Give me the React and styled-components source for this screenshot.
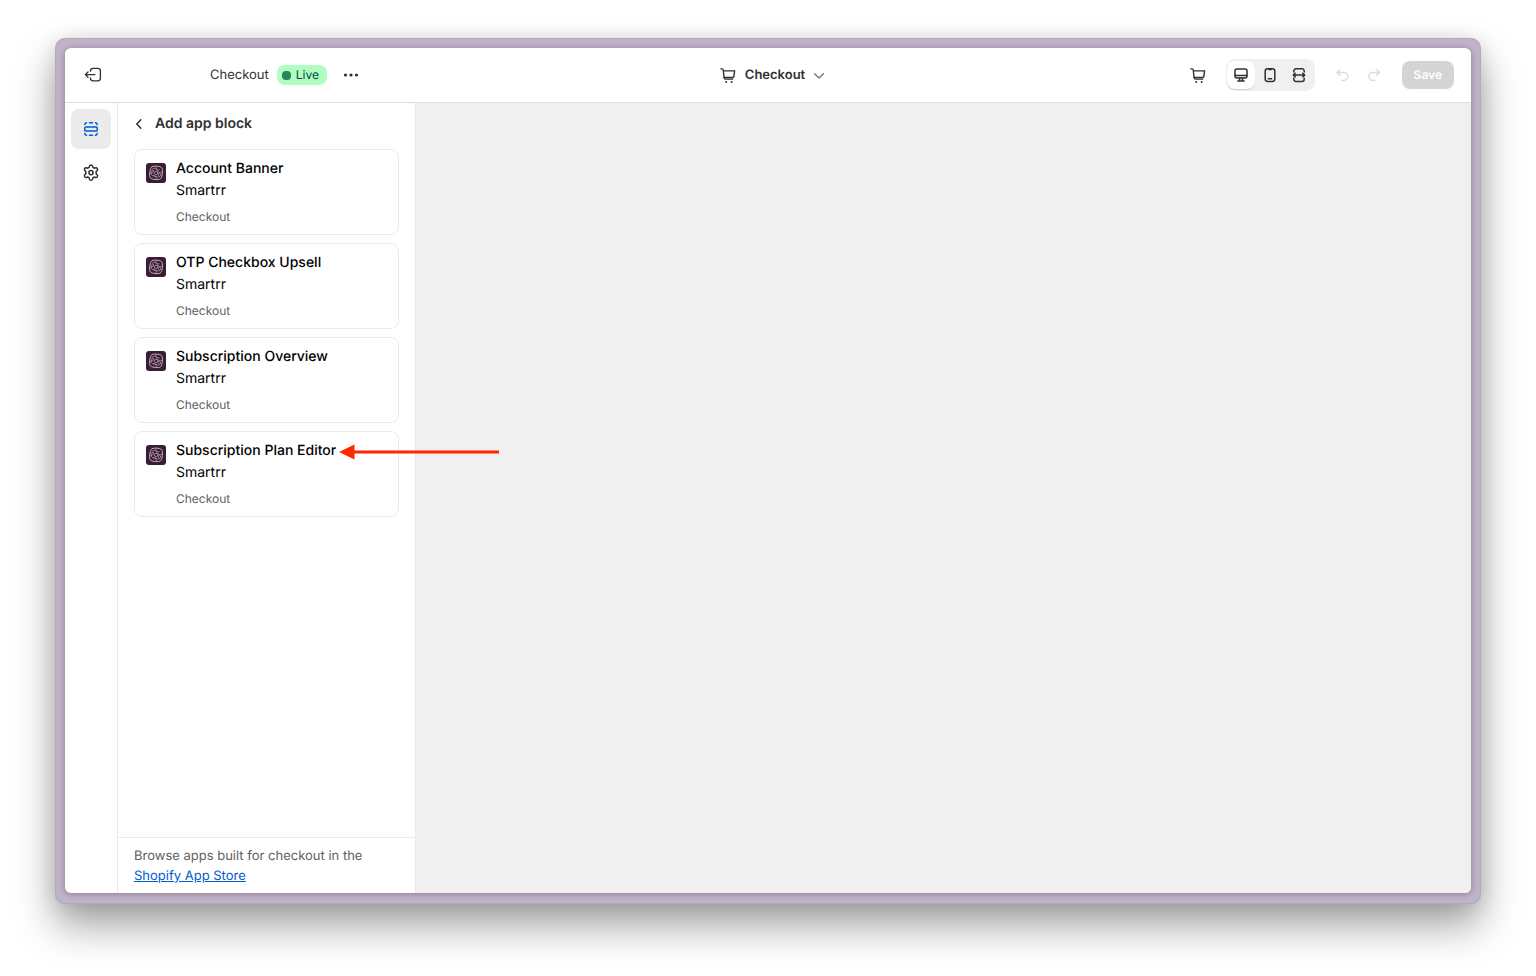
import React from "react";
import styled, { createGlobalStyle, css } from "styled-components";

const GlobalStyle = createGlobalStyle`
  *, *::before, *::after { box-sizing: border-box; }
  body {
    margin: 0;
    background: #fff;
    color: #303030;
    font-family: Inter, "Liberation Sans", sans-serif;
    font-size: 13px;
    line-height: 20px;
    text-rendering: geometricPrecision;
  }
  h1, h2, p, ul { margin: 0; padding: 0; font-weight: inherit; font-size: inherit; }
  button { font: inherit; color: inherit; border: 0; background: none; padding: 0; cursor: pointer; text-rendering: inherit; }
`;

const Page = styled.div`
  display: flex;
  min-height: 100vh;
  padding: 38px 55px 72px;
  overflow: hidden;
`;

const Frame = styled.div`
  flex: 1;
  display: flex;
  min-width: 0;
  padding: 10px 10px 11px;
  border-radius: 10px;
  background: #c1b3c7;
  box-shadow:
    inset 0 0 0 1px rgba(150, 135, 155, 0.25),
    0 22px 40px rgba(0, 0, 0, 0.36),
    0 2px 20px rgba(0, 0, 0, 0.12);
`;

const Window = styled.div`
  flex: 1;
  display: flex;
  flex-direction: column;
  min-width: 0;
  border-radius: 6px;
  background: #fff;
  box-shadow: 0 1px 6px rgba(60, 40, 70, 0.4);
`;

const TopBar = styled.header`
  display: grid;
  grid-template-columns: 1fr auto 1fr;
  align-items: center;
  height: 55px;
  padding: 0 17px 0 18px;
  border-bottom: 1px solid #dedede;
`;

const TopLeft = styled.div`
  display: flex;
  align-items: center;
  justify-content: space-between;
  width: 278px;
`;

const TopRight = styled.div`
  display: flex;
  align-items: center;
  justify-content: flex-end;
`;

const IconButton = styled.button`
  display: flex;
  align-items: center;
  justify-content: center;
  width: 20px;
  height: 20px;
  border-radius: 8px;
  color: ${(p) => p.$color || "#303030"};
`;

const Profile = styled.div`
  display: flex;
  align-items: center;
  gap: 8px;
`;

const ProfileName = styled.span`
  font-size: 13px;
`;

const LiveBadge = styled.span`
  display: flex;
  align-items: center;
  gap: 5px;
  height: 20px;
  padding: 0 8px 0 5px;
  margin-right: 6px;
  border-radius: 8px;
  background: #affebf;
  color: #014b40;
  font-size: 12px;
`;

const LiveDot = styled.span`
  width: 9px;
  height: 9px;
  border-radius: 4px;
  background: #29845a;
`;

const PagePicker = styled.button`
  display: flex;
  align-items: center;
  gap: 4px;
  padding-left: 10px;
  font-weight: 600;
`;

const PageName = styled.span`
  padding-left: 3px;
`;

const DeviceGroup = styled.div`
  display: flex;
  align-items: center;
  gap: 1px;
  height: 32px;
  margin: 0 17px 0 18px;
  padding: 1px 2px 1px 1px;
  border-radius: 9px;
  background: #f0f0f0;
`;

const DeviceButton = styled.button`
  display: flex;
  align-items: center;
  justify-content: center;
  width: 28px;
  height: 28px;
  border-radius: 8px;
  ${(p) =>
    p.$active &&
    css`
      background: #fff;
      box-shadow: 0 1px 1px rgba(0, 0, 0, 0.14);
    `}
`;

const HistoryGroup = styled.div`
  display: flex;
  gap: 12px;
  margin-right: 18px;
`;

const SaveButton = styled.button`
  height: 28px;
  padding: 0 12px;
  border-radius: 8px;
  background: #d4d4d4;
  color: #fff;
  font-size: 12px;
  font-weight: 600;
`;

const Body = styled.div`
  flex: 1;
  display: flex;
  min-height: 0;
`;

const Rail = styled.nav`
  display: flex;
  flex-direction: column;
  gap: 4px;
  width: 53px;
  padding: 6px;
  border-right: 1px solid #e6e6e6;
`;

const RailButton = styled.button`
  display: flex;
  align-items: center;
  justify-content: center;
  width: 40px;
  height: 40px;
  border-radius: 8px;
  background: ${(p) => (p.$active ? "#ebebeb" : "transparent")};
  color: ${(p) => (p.$active ? "#005bd3" : "#303030")};
`;

const Panel = styled.aside`
  position: relative;
  z-index: 1;
  display: flex;
  flex-direction: column;
  width: 298px;
  border-right: 1px solid #ebebeb;
`;

const PanelHeader = styled.div`
  display: flex;
  align-items: center;
  gap: 6px;
  padding: 10px 11px 15px;
`;

const PanelTitle = styled.h1`
  padding-top: 1px;
  font-size: 14px;
  font-weight: 600;
`;

const BlockList = styled.ul`
  flex: 1;
  display: flex;
  flex-direction: column;
  gap: 8px;
  padding: 0 16px;
  list-style: none;
`;

const BlockItem = styled.li`
  position: relative;
`;

const BlockCard = styled.button`
  display: flex;
  align-items: flex-start;
  gap: 10px;
  width: 100%;
  height: 86px;
  padding: 9px 12px 7px 11px;
  border: 1px solid #ebebeb;
  border-radius: 8px;
  color: #000;
  font-size: 14px;
  text-align: left;
`;

const AppLogo = styled.svg`
  flex: none;
  width: 20px;
  height: 20px;
  margin-top: 4px;
`;

const BlockText = styled.span`
  display: flex;
  flex-direction: column;
  gap: 2px;
`;

const BlockName = styled.span`
  font-weight: 500;
`;

const BlockTarget = styled.span`
  margin-top: 4px;
  color: #616161;
  font-size: 12px;
`;

const Arrow = styled.svg`
  position: absolute;
  top: 13px;
  left: 205px;
  width: 161px;
  height: 16px;
  pointer-events: none;
`;

const PanelFooter = styled.footer`
  padding: 8px 16px 7px;
  border-top: 1px solid #ebebeb;
  color: #616161;
`;

const StoreLink = styled.a`
  color: #005bd3;
  text-decoration: underline;
`;

const Canvas = styled.main`
  flex: 1;
  min-width: 0;
  border-radius: 0 0 6px 0;
  background: #f0f0f0;
`;

const Icon = ({ size = 20, width = 1.5, children }) => (
  <svg
    width={size}
    height={size}
    viewBox="0 0 20 20"
    fill="none"
    stroke="currentColor"
    strokeWidth={width}
    strokeLinecap="round"
    strokeLinejoin="round"
    aria-hidden="true"
  >
    {children}
  </svg>
);

const ExitIcon = () => (
  <Icon width={1.3}>
    <path d="M7.500 6.200V5.900a2.500 2.500 0 0 1 2.500-2.500h4.900a2.500 2.500 0 0 1 2.500 2.500v7.400a2.500 2.500 0 0 1-2.500 2.500H10a2.500 2.500 0 0 1-2.500-2.500v-.3" />
    <path d="M12 9.600H2.600M5 7 2.400 9.600 5 12.200" />
  </Icon>
);

const DotsIcon = () => (
  <Icon>
    <g fill="currentColor" stroke="none">
      <circle cx="4.5" cy="10" r="1.6" />
      <circle cx="10" cy="10" r="1.6" />
      <circle cx="15.5" cy="10" r="1.6" />
    </g>
  </Icon>
);

const CartIcon = () => (
  <Icon width={1.4}>
    <path d="M2.900 3.900h1.300a1 1 0 0 1 1 .9l.9 7.700h8.300a1.500 1.500 0 0 0 1.500-1.300l.7-5.300H5.400" />
    <path d="M6.100 12.500a1.600 1.600 0 0 0 1.600 1.600h7.100" />
    <g fill="currentColor" stroke="none">
      <circle cx="8.200" cy="17" r="1" />
      <circle cx="13.600" cy="17" r="1" />
    </g>
  </Icon>
);

const ChevronDownIcon = () => (
  <Icon>
    <path d="M5.600 8.800l4.400 4.200 4.400-4.200" stroke="#7a7a7a" />
  </Icon>
);

const ChevronLeftIcon = () => (
  <Icon>
    <path d="M11.8 5.8 7.8 10l4 4.2" />
  </Icon>
);

const DesktopIcon = () => (
  <Icon>
    <rect x="4" y="4" width="12" height="9" rx="2" />
    <path d="M4.2 10.4h11.6M8.6 13v2.8M11.4 13v2.8M6.8 16h6.4" />
  </Icon>
);

const MobileIcon = () => (
  <Icon>
    <rect x="5.2" y="3.8" width="9.6" height="12.6" rx="2.4" />
    <path d="M8.8 4.4h2.4M8.4 13.8h3.2" />
  </Icon>
);

const FullWidthIcon = () => (
  <Icon>
    <path d="M4.800 6.900V6a2.200 2.200 0 0 1 2.200-2.200h6A2.200 2.200 0 0 1 15.200 6v.9M4.800 13.300v.9A2.200 2.200 0 0 0 7 16.400h6a2.200 2.200 0 0 0 2.200-2.200v-.9" />
    <path d="M4.400 10.100h11.200M6.200 8.300l-1.900 1.800 1.900 1.800M13.800 8.300l1.900 1.800-1.900 1.800" />
  </Icon>
);

const UndoIcon = () => (
  <Icon>
    <path d="M7.800 4.700 5 7.500l2.800 2.800M5.200 7.500h6.600a4 4 0 0 1 0 8H10" />
  </Icon>
);

const RedoIcon = () => (
  <Icon>
    <path d="M12.800 4.700l2.800 2.800-2.800 2.800M15.400 7.500H8.800a4 4 0 0 0 0 8h1.800" />
  </Icon>
);

const SectionsIcon = () => (
  <Icon>
    <rect x="3.800" y="7.900" width="12.400" height="4.200" rx="1.200" />
    <path d="M3.800 5.600a2 2 0 0 1 1.700-1.800M8.500 3.700h3M14.500 3.800a2 2 0 0 1 1.700 1.800M3.800 14.400a2 2 0 0 0 1.700 1.800M8.500 16.300h3M14.500 16.200a2 2 0 0 0 1.700-1.800" />
  </Icon>
);

const GearIcon = () => (
  <Icon size={24} width={1.25}>
    <path d="M8.700 4.300c.2-.6.6-.9 1.300-.9s1.100.3 1.300.9l.3 1.100 1 .6 1.200-.3c.6-.2 1.100 0 1.500.7.300.6.300 1.100-.1 1.500l-.9.9v1.800l.9.900c.4.400.4.900.1 1.500-.4.700-.9.900-1.500.7l-1.200-.3-1 .6-.3 1.100c-.2.600-.6.900-1.300.900s-1.100-.3-1.300-.9l-.3-1.100-1-.6-1.200.3c-.6.200-1.100 0-1.500-.7-.3-.6-.3-1.100.1-1.500l.9-.9V8.800l-.9-.9c-.4-.4-.4-.9-.1-1.500.4-.7.900-.9 1.500-.7l1.200.3 1-.6z" />
    <circle cx="10" cy="9.700" r="1.700" />
  </Icon>
);

const SmartrrLogo = () => (
  <AppLogo viewBox="0 0 20 20" fill="none" stroke="#cdbfca" aria-hidden="true">
    <rect width="20" height="20" rx="3" fill="#3b1c35" stroke="none" />
    <path
      strokeWidth="0.9"
      d="M7 3.400c2-.5 4.300-.3 6.600.2 1.800.4 2.700 1.400 2.800 3.200.2 2.300 0 4.600-.6 6.600-.5 1.900-1.400 2.900-3.200 3.100-2.200.3-4.300.1-6.200-.5-1.900-.6-2.700-1.600-2.800-3.300-.1-2.200.1-4.200.7-6.200C4.800 4.600 5.500 3.700 7 3.400z"
    />
    <path
      strokeWidth="0.6"
      d="M6.200 6.400c2-2 4.600-.8 5 1.200.4 2.200 3.600 1.800 3.400 4.400-.2 2.200-3.200 2.600-4.600 1.400-1.600-1.400-4.200.2-4.800-2-.4-1.800 1-2 1-5zM10 3.600c-1 2.600 1.600 3.600 3.600 3.200M16 9.600c-2.400-1-3.800.8-3.600 3.200M10 16.200c1-2.200-.4-3.400-2.600-3.200M4 10c2.600.6 4-.6 3.400-3"
    />
    <circle cx="10" cy="10" r="1.700" strokeWidth="0.6" />
  </AppLogo>
);

const BLOCKS = [
  { name: "Account Banner" },
  { name: "OTP Checkbox Upsell" },
  { name: "Subscription Overview" },
  { name: "Subscription Plan Editor", pointed: true },
];

export default function App() {
  return (
    <>
      <GlobalStyle />
      <Page>
        <Frame>
          <Window>
            <TopBar>
              <TopLeft>
                <IconButton aria-label="Exit">
                  <ExitIcon />
                </IconButton>
                <Profile>
                  <ProfileName>Checkout</ProfileName>
                  <LiveBadge>
                    <LiveDot />
                    Live
                  </LiveBadge>
                  <IconButton aria-label="More actions">
                    <DotsIcon />
                  </IconButton>
                </Profile>
              </TopLeft>
              <PagePicker>
                <CartIcon />
                <PageName>Checkout</PageName>
                <ChevronDownIcon />
              </PagePicker>
              <TopRight>
                <IconButton aria-label="Preview cart">
                  <CartIcon />
                </IconButton>
                <DeviceGroup>
                  <DeviceButton $active aria-label="Desktop">
                    <DesktopIcon />
                  </DeviceButton>
                  <DeviceButton aria-label="Mobile">
                    <MobileIcon />
                  </DeviceButton>
                  <DeviceButton aria-label="Full width">
                    <FullWidthIcon />
                  </DeviceButton>
                </DeviceGroup>
                <HistoryGroup>
                  <IconButton $color="#dcdcdc" aria-label="Undo" disabled>
                    <UndoIcon />
                  </IconButton>
                  <IconButton $color="#dcdcdc" aria-label="Redo" disabled>
                    <RedoIcon />
                  </IconButton>
                </HistoryGroup>
                <SaveButton disabled>Save</SaveButton>
              </TopRight>
            </TopBar>
            <Body>
              <Rail>
                <RailButton $active aria-label="Sections">
                  <SectionsIcon />
                </RailButton>
                <RailButton aria-label="Settings">
                  <GearIcon />
                </RailButton>
              </Rail>
              <Panel>
                <PanelHeader>
                  <IconButton aria-label="Back">
                    <ChevronLeftIcon />
                  </IconButton>
                  <PanelTitle>Add app block</PanelTitle>
                </PanelHeader>
                <BlockList>
                  {BLOCKS.map((block) => (
                    <BlockItem key={block.name}>
                      <BlockCard>
                        <SmartrrLogo />
                        <BlockText>
                          <BlockName>{block.name}</BlockName>
                          <span>Smartrr</span>
                          <BlockTarget>Checkout</BlockTarget>
                        </BlockText>
                      </BlockCard>
                      {block.pointed && (
                        <Arrow viewBox="0 0 161 16" aria-hidden="true">
                          <path d="M0 8 15.500.5v15z" fill="#ff2600" />
                          <path d="M14 8h146" stroke="#ff2600" strokeWidth="3" />
                        </Arrow>
                      )}
                    </BlockItem>
                  ))}
                </BlockList>
                <PanelFooter>
                  <p>Browse apps built for checkout in the</p>
                  <StoreLink href="#app-store">Shopify App Store</StoreLink>
                </PanelFooter>
              </Panel>
              <Canvas />
            </Body>
          </Window>
        </Frame>
      </Page>
    </>
  );
}
